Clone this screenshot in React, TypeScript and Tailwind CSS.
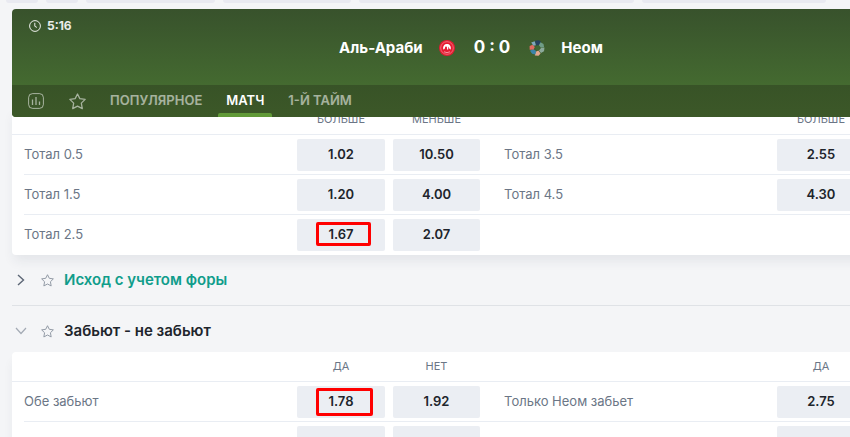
import { clsx } from "clsx";

interface Odd {
  value?: string;
  mark?: string;
}

interface Line {
  left: string;
  odds: [Odd, Odd];
  right?: string;
  rightOdd?: Odd;
}

const TOTALS: Line[] = [
  { left: "Тотал 0.5", odds: [{ value: "1.02" }, { value: "10.50" }], right: "Тотал 3.5", rightOdd: { value: "2.55" } },
  { left: "Тотал 1.5", odds: [{ value: "1.20" }, { value: "4.00" }], right: "Тотал 4.5", rightOdd: { value: "4.30" } },
  { left: "Тотал 2.5", odds: [{ value: "1.67", mark: "top-[3px] h-6 w-[55px]" }, { value: "2.07" }] },
];

const BOTH_SCORE: Line[] = [
  { left: "Обе забьют", odds: [{ value: "1.78", mark: "top-[2px] h-7 w-[57px]" }, { value: "1.92" }], right: "Только Неом забьет", rightOdd: { value: "2.75" } },
  { left: "", odds: [{}, {}], right: "", rightOdd: {} },
];

function StarIcon({ className }: { className?: string }) {
  return (
    <svg viewBox="0 0 16 16" className={className} fill="none" stroke="currentColor" strokeWidth="1.2" strokeLinejoin="round" aria-hidden="true">
      <path d="M8 .9l2.2 4.4 5 .7-3.6 3.5.9 5.2L8 12.3l-4.5 2.4.9-5.2L.8 6l5-.7z" />
    </svg>
  );
}

function ClockIcon() {
  return (
    <svg viewBox="0 0 12 12" className="size-3" fill="none" stroke="currentColor" aria-hidden="true">
      <circle cx="6" cy="6" r="5.4" />
      <path d="M5.8 2.8v3.5l2.1 1.1" />
    </svg>
  );
}

function StatsIcon() {
  return (
    <svg viewBox="0 0 16 16" className="size-4" fill="none" stroke="currentColor" aria-hidden="true">
      <rect x=".6" y=".6" width="14.8" height="14.8" rx="4" />
      <path d="M4.5 6.5v5.5M8 4v8M11.5 8.5V12" strokeWidth="1.3" />
    </svg>
  );
}

function HomeCrest() {
  return (
    <svg viewBox="0 0 16 16" className="size-4" aria-hidden="true">
      <circle cx="8" cy="8" r="8" fill="#e51b32" />
      <circle cx="8" cy="8" r="6.3" fill="none" stroke="#f58a95" strokeWidth=".7" />
      <path d="M4.3 9.4C3.6 6 5.6 4 8 4s4.4 2 3.7 5.4L10.6 9 9.4 6.6 9.2 9.6 8 9.4 7.9 6.8 6.4 6.6 5.6 9z" fill="#fff" />
      <path d="M5 11.8q3 1.6 6 0" fill="none" stroke="#f9b4bb" strokeWidth=".8" />
    </svg>
  );
}

function AwayCrest() {
  return (
    <svg viewBox="0 0 16 16" className="size-4" aria-hidden="true">
      <path d="M6 .8l4-.5 2.2 1.8-1.7 3.2-3.6.3z" fill="#24415f" />
      <path d="M11.5 2.2l3 1.8.6 3.2-3.3.6-1.9-2.6z" fill="#6f9c86" />
      <path d="M12 8l3.5-.4-.5 3.6-3 1.8-2-2.6z" fill="#8ba99a" />
      <path d="M9.4 10.6l2.2 2.8-2 2.3-3.8-.3.8-3.6z" fill="#e3a78f" />
      <path d="M4.2 9l3 2-.9 3.4-3.2-.7L1 10.8z" fill="#3b84a9" />
      <path d="M.6 6l3-1.2 2.2 2.2-1.2 2.6L.7 9.7z" fill="#df6b61" />
      <path d="M2.2 2.4l3.5-1.2 1.2 4-2.5.5z" fill="#7fa7bd" />
      <path d="M7.3 5.8l2.5-.2 1 2.4-1.5 2.2-2.3-.3-.8-2.2z" fill="#3f6735" />
    </svg>
  );
}

function OddCell({ odd }: { odd?: Odd }) {
  return (
    <td className="py-0 pr-2 align-top">
      {odd && (
        <button
          type="button"
          aria-label={odd.value ? undefined : "—"}
          className="relative mt-1 mb-[3px] flex h-8 w-full items-center justify-center rounded-xs bg-[#ebeef3] text-[13px] font-semibold text-[#20242b]"
        >
          {odd.value}
          {odd.mark && <span className={clsx("absolute left-[19px] rounded-xs border-3 border-[#ff0000]", odd.mark)} />}
        </button>
      )}
    </td>
  );
}

function Market({ heads, lines }: { heads: [string, string]; lines: Line[] }) {
  return (
    <div className="overflow-hidden rounded bg-white shadow-[0_8px_12px_-2px_rgba(40,50,80,0.08)]">
      <table className="w-full table-fixed border-separate border-spacing-0">
        <colgroup>
          <col className="w-3" />
          <col />
          <col className="w-24" />
          <col className="w-[95px]" />
          <col className="w-4" />
          <col />
          <col className="w-24" />
          <col className="w-[99px]" />
        </colgroup>
        <thead>
          <tr className="h-[30px] text-[11px] text-[#6b7686] [&>*]:border-b [&>*]:border-[#e9edf3]">
            <td />
            <td />
            <th className="py-0 pr-2 font-normal">{heads[0]}</th>
            <th className="py-0 pr-2 font-normal">{heads[1]}</th>
            <td />
            <td />
            <th className="py-0 pr-2 font-normal">{heads[0]}</th>
            <td />
          </tr>
        </thead>
        <tbody className="text-[13px] text-[#6b7686]">
          {lines.map((line, i) => (
            <tr
              key={i}
              className={clsx("h-10", i < lines.length - 1 && "[&>*]:border-b [&>*]:border-[#e9edf3] [&>*:first-child]:border-b-0")}
            >
              <td />
              <th className="p-0 text-left font-normal">{line.left}</th>
              <OddCell odd={line.odds[0]} />
              <OddCell odd={line.odds[1]} />
              <td />
              <th className="p-0 text-left font-normal">{line.right}</th>
              <OddCell odd={line.rightOdd} />
              <td />
            </tr>
          ))}
        </tbody>
      </table>
    </div>
  );
}

export default function App() {
  return (
    <div className="h-screen overflow-hidden bg-[#f4f5f7] font-['Inter','Open_Sans',sans-serif]">
      {/* Bottom edge of the filter chips */}
      <div className="flex gap-2 pl-[6px] [&>*]:h-[3px] [&>*]:shrink-0 [&>*]:rounded-b [&>*]:bg-[#e9eaf1]">
        <div className="w-8" />
        <div className="w-8" />
        <div className="w-[129px]" />
        <div className="w-32" />
        <div className="w-[275px]" />
        <div className="w-[184px]" />
      </div>

      <main className="mt-[6px] ml-3 min-w-[960px]">
        {/* Scoreboard */}
        <header className="relative z-10 overflow-hidden rounded bg-linear-to-b from-[#38522c] to-[#446a30] to-70% text-white">
          <div className="h-[76px] pt-2">
            <div className="flex h-[18px] items-center gap-[6px] pl-[17px] text-xs font-bold text-white/90">
              <ClockIcon />
              <time>5:16</time>
            </div>
            <div className="grid h-5 grid-cols-[1fr_auto_1fr] items-center gap-[19px] text-[15px] font-bold">
              <div className="flex items-center justify-end gap-4">
                <span>Аль-Араби</span>
                <HomeCrest />
              </div>
              <span className="text-[17px]">0 : 0</span>
              <div className="flex items-center gap-4">
                <AwayCrest />
                <span>Неом</span>
              </div>
            </div>
          </div>
          <nav className="flex h-8 items-center bg-linear-to-b from-[#385327] to-[#3c5828] pl-4 text-[13px] font-semibold text-white/55">
            <button type="button" aria-label="Статистика"><StatsIcon /></button>
            <button type="button" aria-label="В избранное" className="ml-[25px]"><StarIcon className="size-[17px]" /></button>
            <div className="ml-4 flex gap-2 self-stretch">
              <button type="button" className="px-2">ПОПУЛЯРНОЕ</button>
              <button type="button" className="relative px-2 text-white">
                МАТЧ
                <span className="absolute inset-x-0 bottom-0 h-1 rounded-t-xs bg-[#619a38]" />
              </button>
              <button type="button" className="px-2">1-Й ТАЙМ</button>
            </div>
          </nav>
        </header>

        <section className="-mt-3">
          <Market heads={["БОЛЬШЕ", "МЕНЬШЕ"]} lines={TOTALS} />
        </section>

        <section className="flex h-[51px] items-center border-b border-[#dfe2e6] pl-1">
          <button type="button" aria-label="Развернуть" className="flex size-[10px] items-center justify-center text-[#5c6675]">
            <svg viewBox="0 0 10 12" className="h-3 w-[10px] shrink-0" fill="none" stroke="currentColor" strokeWidth="1.4">
              <path d="M2 1l5.5 5L2 11" />
            </svg>
          </button>
          <button type="button" aria-label="В избранное" className="ml-[15px] text-[#9098a3]"><StarIcon className="size-[13px]" /></button>
          <h2 className="ml-[10px] text-[15px] font-semibold text-[#109d8b]">Исход с учетом форы</h2>
        </section>

        <section>
          <div className="flex h-[46px] items-center pt-1 pl-1">
            <button type="button" aria-label="Свернуть" className="flex size-[10px] items-center justify-center text-[#a3aab4]">
              <svg viewBox="0 0 12 8" className="h-2 w-3 shrink-0" fill="none" stroke="currentColor" strokeWidth="1.2">
                <path d="M1 1l5 5.5L11 1" />
              </svg>
            </button>
            <button type="button" aria-label="В избранное" className="ml-[15px] text-[#9098a3]"><StarIcon className="size-[13px]" /></button>
            <h2 className="ml-[10px] text-[15px] font-semibold text-[#20242b]">Забьют - не забьют</h2>
          </div>
          <Market heads={["ДА", "НЕТ"]} lines={BOTH_SCORE} />
        </section>
      </main>
    </div>
  );
}
